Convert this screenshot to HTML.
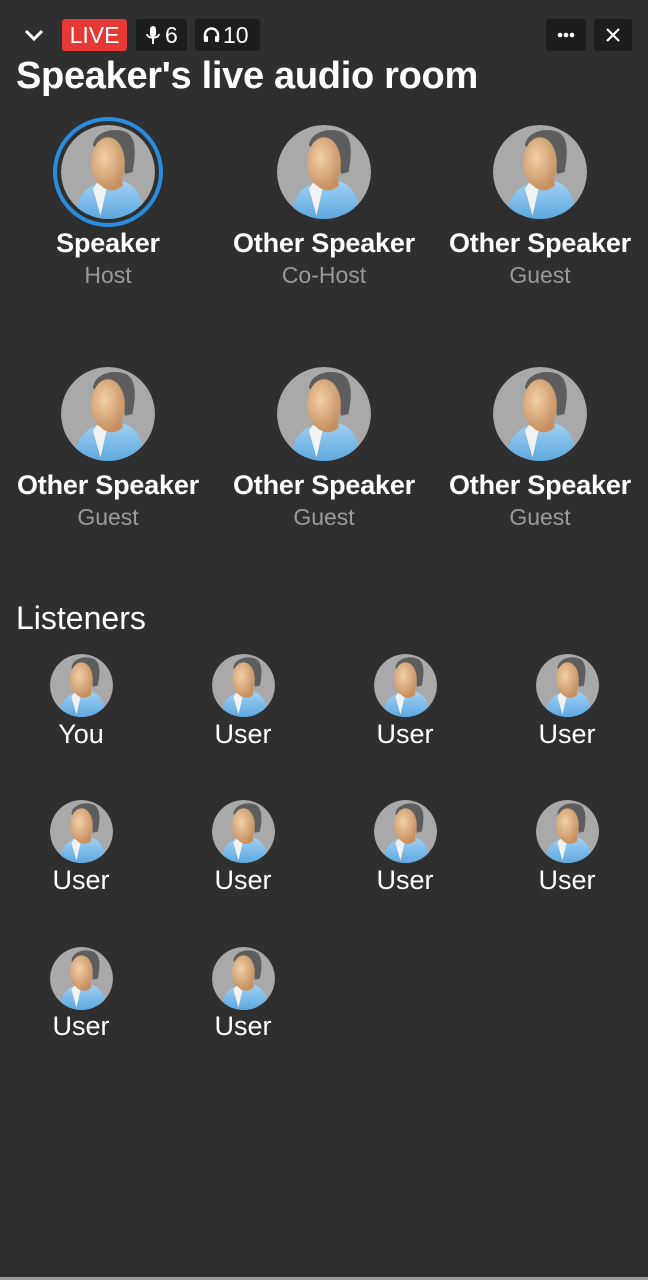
<!DOCTYPE html>
<html><head><meta charset="utf-8"><style>
*{margin:0;padding:0;box-sizing:border-box}
body{width:648px;height:1280px;background:#2f2f2f;font-family:"Liberation Sans",Roboto,sans-serif;color:#fff;position:relative;overflow:hidden}
.a{position:absolute}
.box{position:absolute;top:19px;height:32px;border-radius:3px;background:#1d1d1d;font-size:23px;line-height:32px;color:#fff}
.nm{position:absolute;width:216px;text-align:center;font-size:27px;font-weight:bold;letter-spacing:-0.2px;white-space:nowrap}
.rl{position:absolute;width:216px;text-align:center;font-size:23px;color:#9a9a9a}
.ln{position:absolute;width:162px;text-align:center;font-size:27px}
svg.av{position:absolute}
</style></head><body>
<svg width="0" height="0" style="position:absolute">
<defs>
<clipPath id="cc"><circle cx="50" cy="50" r="50"/></clipPath>
<radialGradient id="fg" cx="0.4" cy="0.4" r="0.7"><stop offset="0" stop-color="#f3cfa6"/><stop offset="1" stop-color="#c08a5a"/></radialGradient>
<linearGradient id="sg" x1="0" y1="0" x2="0" y2="1"><stop offset="0" stop-color="#9fd0f3"/><stop offset="1" stop-color="#5ea8e0"/></linearGradient>
<symbol id="av" viewBox="0 0 100 100">
<g clip-path="url(#cc)">
<circle cx="50" cy="50" r="50" fill="#a9a9a9"/>
<path d="M14 100 C16 76 26 66 40 62 L66 60 C80 64 88 76 88 100 Z" fill="url(#sg)"/>
<path d="M38 62 L50 62 L42 96 L34 68 Z" fill="#f2f2f2"/>
<path d="M44 54 L64 54 L66 64 C58 72 50 70 44 66 Z" fill="#c8905e"/>
<path d="M34 22 C36 6 58 2 70 8 C80 14 80 30 76 50 L68 52 L66 28 L36 24 Z" fill="#5d5d5d"/>
<ellipse cx="50" cy="40" rx="18" ry="27" fill="url(#fg)"/>
</g>
</symbol>
</defs></svg>

<svg class="a" style="left:24px;top:28px" width="20" height="14" viewBox="0 0 20 14"><path d="M2 3 L10 11 L18 3" stroke="#fff" stroke-width="3" fill="none"/></svg>
<div class="box" style="left:62px;width:65px;background:#e53935;text-align:center">LIVE</div>
<div class="box" style="left:136px;width:51px">
<svg class="a" style="left:10px;top:7px" width="14" height="19" viewBox="0 0 14 19"><rect x="4" y="0" width="6" height="11" rx="3" fill="#fff"/><path d="M1 8 C1 13 13 13 13 8" stroke="#fff" stroke-width="1.8" fill="none"/><rect x="6" y="12" width="2" height="6" fill="#fff"/></svg>
<span class="a" style="left:29px">6</span></div>
<div class="box" style="left:195px;width:65px">
<svg class="a" style="left:8px;top:8px" width="17" height="16" viewBox="0 0 17 16"><path d="M2 13 V8 A6.5 6.5 0 0 1 15 8 V13" stroke="#fff" stroke-width="2.4" fill="none"/><rect x="1" y="9" width="4" height="6" rx="1" fill="#fff"/><rect x="12" y="9" width="4" height="6" rx="1" fill="#fff"/></svg>
<span class="a" style="left:28px">10</span></div>
<div class="box" style="left:546px;width:40px"><svg class="a" style="left:11px;top:13px" width="18" height="6"><circle cx="3" cy="3" r="2.3" fill="#fff"/><circle cx="9" cy="3" r="2.3" fill="#fff"/><circle cx="15" cy="3" r="2.3" fill="#fff"/></svg></div>
<div class="box" style="left:594px;width:38px"><svg class="a" style="left:12px;top:9px" width="14" height="14"><path d="M1 1 L13 13 M13 1 L1 13" stroke="#fff" stroke-width="2.2"/></svg></div>

<div class="a" style="left:16px;top:55px;font-size:38px;font-weight:bold;letter-spacing:-0.3px;white-space:nowrap">Speaker's live audio room</div>

<div class="a" style="left:53px;top:117px;width:110px;height:110px;border-radius:50%;border:4px solid #2a8de0"></div>
<svg class="av" style="left:61px;top:125px" width="94" height="94"><use href="#av"/></svg>
<svg class="av" style="left:277px;top:125px" width="94" height="94"><use href="#av"/></svg>
<svg class="av" style="left:493px;top:125px" width="94" height="94"><use href="#av"/></svg>
<div class="nm" style="left:0;top:228px">Speaker</div>
<div class="nm" style="left:216px;top:228px">Other Speaker</div>
<div class="nm" style="left:432px;top:228px">Other Speaker</div>
<div class="rl" style="left:0;top:262px">Host</div>
<div class="rl" style="left:216px;top:262px">Co-Host</div>
<div class="rl" style="left:432px;top:262px">Guest</div>

<svg class="av" style="left:61px;top:367px" width="94" height="94"><use href="#av"/></svg>
<svg class="av" style="left:277px;top:367px" width="94" height="94"><use href="#av"/></svg>
<svg class="av" style="left:493px;top:367px" width="94" height="94"><use href="#av"/></svg>
<div class="nm" style="left:0;top:470px">Other Speaker</div>
<div class="nm" style="left:216px;top:470px">Other Speaker</div>
<div class="nm" style="left:432px;top:470px">Other Speaker</div>
<div class="rl" style="left:0;top:504px">Guest</div>
<div class="rl" style="left:216px;top:504px">Guest</div>
<div class="rl" style="left:432px;top:504px">Guest</div>

<div class="a" style="left:16px;top:600px;font-size:32px">Listeners</div>

<svg class="av" style="left:50px;top:654px" width="63" height="63"><use href="#av"/></svg>
<svg class="av" style="left:212px;top:654px" width="63" height="63"><use href="#av"/></svg>
<svg class="av" style="left:374px;top:654px" width="63" height="63"><use href="#av"/></svg>
<svg class="av" style="left:536px;top:654px" width="63" height="63"><use href="#av"/></svg>
<div class="ln" style="left:0;top:719px">You</div>
<div class="ln" style="left:162px;top:719px">User</div>
<div class="ln" style="left:324px;top:719px">User</div>
<div class="ln" style="left:486px;top:719px">User</div>

<svg class="av" style="left:50px;top:800px" width="63" height="63"><use href="#av"/></svg>
<svg class="av" style="left:212px;top:800px" width="63" height="63"><use href="#av"/></svg>
<svg class="av" style="left:374px;top:800px" width="63" height="63"><use href="#av"/></svg>
<svg class="av" style="left:536px;top:800px" width="63" height="63"><use href="#av"/></svg>
<div class="ln" style="left:0;top:865px">User</div>
<div class="ln" style="left:162px;top:865px">User</div>
<div class="ln" style="left:324px;top:865px">User</div>
<div class="ln" style="left:486px;top:865px">User</div>

<svg class="av" style="left:50px;top:947px" width="63" height="63"><use href="#av"/></svg>
<svg class="av" style="left:212px;top:947px" width="63" height="63"><use href="#av"/></svg>
<div class="ln" style="left:0;top:1011px">User</div>
<div class="ln" style="left:162px;top:1011px">User</div>

<div class="a" style="left:0;top:1277px;width:648px;height:3px;background:#9a9a9a"></div>
</body></html>
